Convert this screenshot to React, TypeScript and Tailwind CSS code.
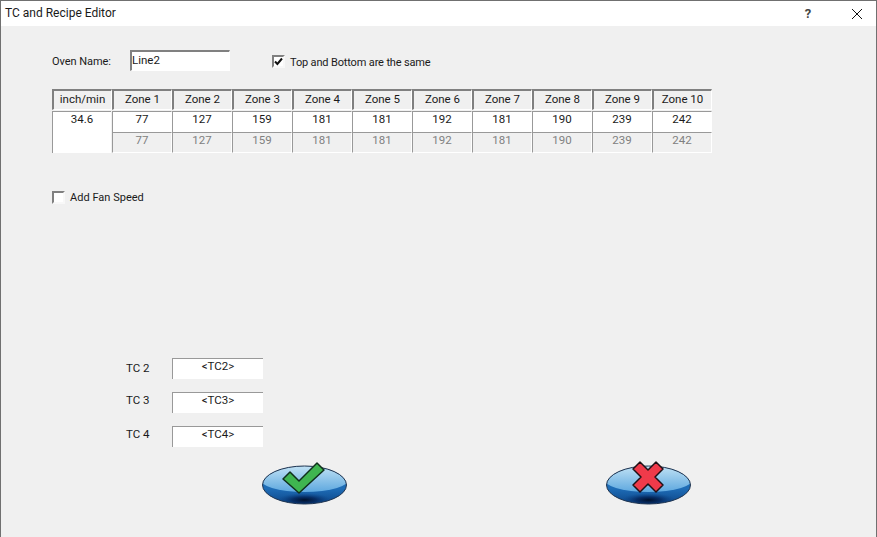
import React from "react";

const zones = ["Zone 1","Zone 2","Zone 3","Zone 4","Zone 5","Zone 6","Zone 7","Zone 8","Zone 9","Zone 10"];
const vals = [77,127,159,181,181,192,181,190,239,242];
const font = "font-['Roboto',sans-serif] text-[11.5px] leading-[14px] text-[#1a1a1a]";

function Check({ checked }: { checked: boolean }) {
  return (
    <span className="w-[13px] h-[13px] bg-white border-2 border-[#f8f8f8] border-t-[#808080] border-l-[#808080] flex items-center justify-center">
      {checked && (
        <svg width="9" height="9" viewBox="0 0 9 9"><path d="M1 4.5 L3.4 7 L8 1.5" fill="none" stroke="#111" strokeWidth="2" /></svg>
      )}
    </span>
  );
}

function Oval({ id, children }: { id: string; children: React.ReactNode }) {
  return (
    <svg width="87" height="46" viewBox="0 0 87 46" className="block">
      <defs>
        <linearGradient id={id + "a"} x1="0" y1="0" x2="0" y2="1">
          <stop offset="0" stopColor="#1f6fb8" />
          <stop offset="0.6" stopColor="#1e6cb6" />
          <stop offset="1" stopColor="#0c4588" />
        </linearGradient>
        <linearGradient id={id + "h"} x1="0" y1="0" x2="0" y2="1">
          <stop offset="0" stopColor="#c8e6f6" />
          <stop offset="1" stopColor="#5ea8df" />
        </linearGradient>
        <radialGradient id={id + "b"} cx="0.5" cy="0.5" r="0.5">
          <stop offset="0" stopColor="#00102a" />
          <stop offset="0.45" stopColor="#04255a" stopOpacity="0.8" />
          <stop offset="1" stopColor="#0c4588" stopOpacity="0" />
        </radialGradient>
        <clipPath id={id + "c"}>
          <ellipse cx="43.5" cy="25" rx="42" ry="19" />
        </clipPath>
      </defs>
      <ellipse cx="43.5" cy="25" rx="42" ry="19" fill={`url(#${id}a)`} />
      <g clipPath={`url(#${id}c)`}>
        <ellipse cx="43.5" cy="18" rx="46" ry="14" fill={`url(#${id}h)`} />
        <ellipse cx="43.5" cy="40" rx="27" ry="7" fill={`url(#${id}b)`} />
      </g>
      <ellipse cx="43.5" cy="25" rx="42" ry="19" fill="none" stroke="#20344f" strokeWidth="1" />
      {children}
    </svg>
  );
}

function Header({ children }: { children: React.ReactNode }) {
  return (
    <div className="w-[60px] h-[21px] bg-[#f0f0f0] border-t-2 border-l-2 border-t-[#808080] border-l-[#808080] border-r border-b border-r-white border-b-white flex items-center justify-center pb-[3px]">
      {children}
    </div>
  );
}

function TcRow({ label, pad }: { label: string; pad: string }) {
  return (
    <div className="flex items-center h-[21px]">
      <span className={`w-[46px] ${pad}`}>TC {label}</span>
      <div className="w-[91px] h-[21px] bg-white border-t border-l border-t-[#999] border-l-[#999] text-center">
        {`<TC${label}>`}
      </div>
    </div>
  );
}

export default function App() {
  return (
    <div className={`w-[877px] h-[537px] bg-[#f0f0f0] border-t border-l border-r border-[#707070] overflow-hidden flex flex-col ${font}`}>
      <div className="h-[25px] bg-white flex items-center pl-[4px] shrink-0 text-[12px]">
        <span className="flex-1 pb-[1px]">TC and Recipe Editor</span>
        <span className="text-[13px] font-bold w-[16px] mr-[35px] text-center text-[#444]">?</span>
        <svg width="12" height="12" viewBox="0 0 12 12" className="mr-[13px]"><path d="M1 1 L11 11 M11 1 L1 11" stroke="#111" strokeWidth="1" /></svg>
      </div>
      <div className="pl-[51px] flex flex-col">
        <div className="flex items-center mt-[24px] h-[21px]">
          <span className="w-[78px] pt-[3px] text-[11px] tracking-[-0.05px]">Oven Name:</span>
          <div className="w-[100px] h-[21px] bg-white border-t-2 border-l-2 border-t-[#808080] border-l-[#808080] border-r border-b border-r-white border-b-white leading-[16px]">Line2</div>
          <div className="ml-[42px] flex items-center gap-[5px] pt-[2px]">
            <Check checked />
            <span className="text-[11px] tracking-[-0.15px] pt-[2px]">Top and Bottom are the same</span>
          </div>
        </div>
        <div className="mt-[18px] flex flex-col w-[660px]">
          <div className="flex">
            <Header>inch/min</Header>
            {zones.map((z) => <Header key={z}>{z}</Header>)}
          </div>
          <div className="flex mt-[1px]">
            <div className="w-[60px] h-[42px] pr-[1px]">
              <div className="h-full bg-white border-t border-l border-t-[#999] border-l-[#999] text-center">34.6</div>
            </div>
            <div className="grid grid-cols-10 w-[600px]">
              {vals.map((v, i) => (
                <div key={i} className="h-[21px] bg-white border-t border-l border-r border-t-[#999] border-l-[#999] border-r-white text-center">{v}</div>
              ))}
              {vals.map((v, i) => (
                <div key={i} className="h-[21px] bg-[#f0f0f0] border-t border-l border-r border-b border-t-[#999] border-l-[#999] border-r-white border-b-white text-center text-[#808080]">{v}</div>
              ))}
            </div>
          </div>
        </div>
        <div className="flex items-center gap-[5px] mt-[37px]">
          <Check checked={false} />
          <span className="text-[11px] tracking-[0.02px] pt-[1px]">Add Fan Speed</span>
        </div>
        <div className="flex flex-col gap-[13px] ml-[74px] mt-[153px]">
          <TcRow label="2" pad="pb-[1px]" />
          <TcRow label="3" pad="pb-[5px]" />
          <TcRow label="4" pad="pb-[6px]" />
        </div>
        <div className="flex ml-[209px] mt-[13px] gap-[257px]">
          <Oval id="ok">
            <path d="M22 19 L29 12 L38 21 L56 3 L63 10 L38 33 Z" fill="#3fb550" stroke="#10301c" strokeWidth="1.5" strokeLinejoin="round" />
          </Oval>
          <Oval id="no">
            <path d="M35 2 L43 10 L51 2 L58 9 L50 17 L58 25 L51 32 L43 24 L35 32 L28 25 L36 17 L28 9 Z" fill="#ef3a4a" stroke="#201016" strokeWidth="1.5" strokeLinejoin="round" />
          </Oval>
        </div>
      </div>
    </div>
  );
}
